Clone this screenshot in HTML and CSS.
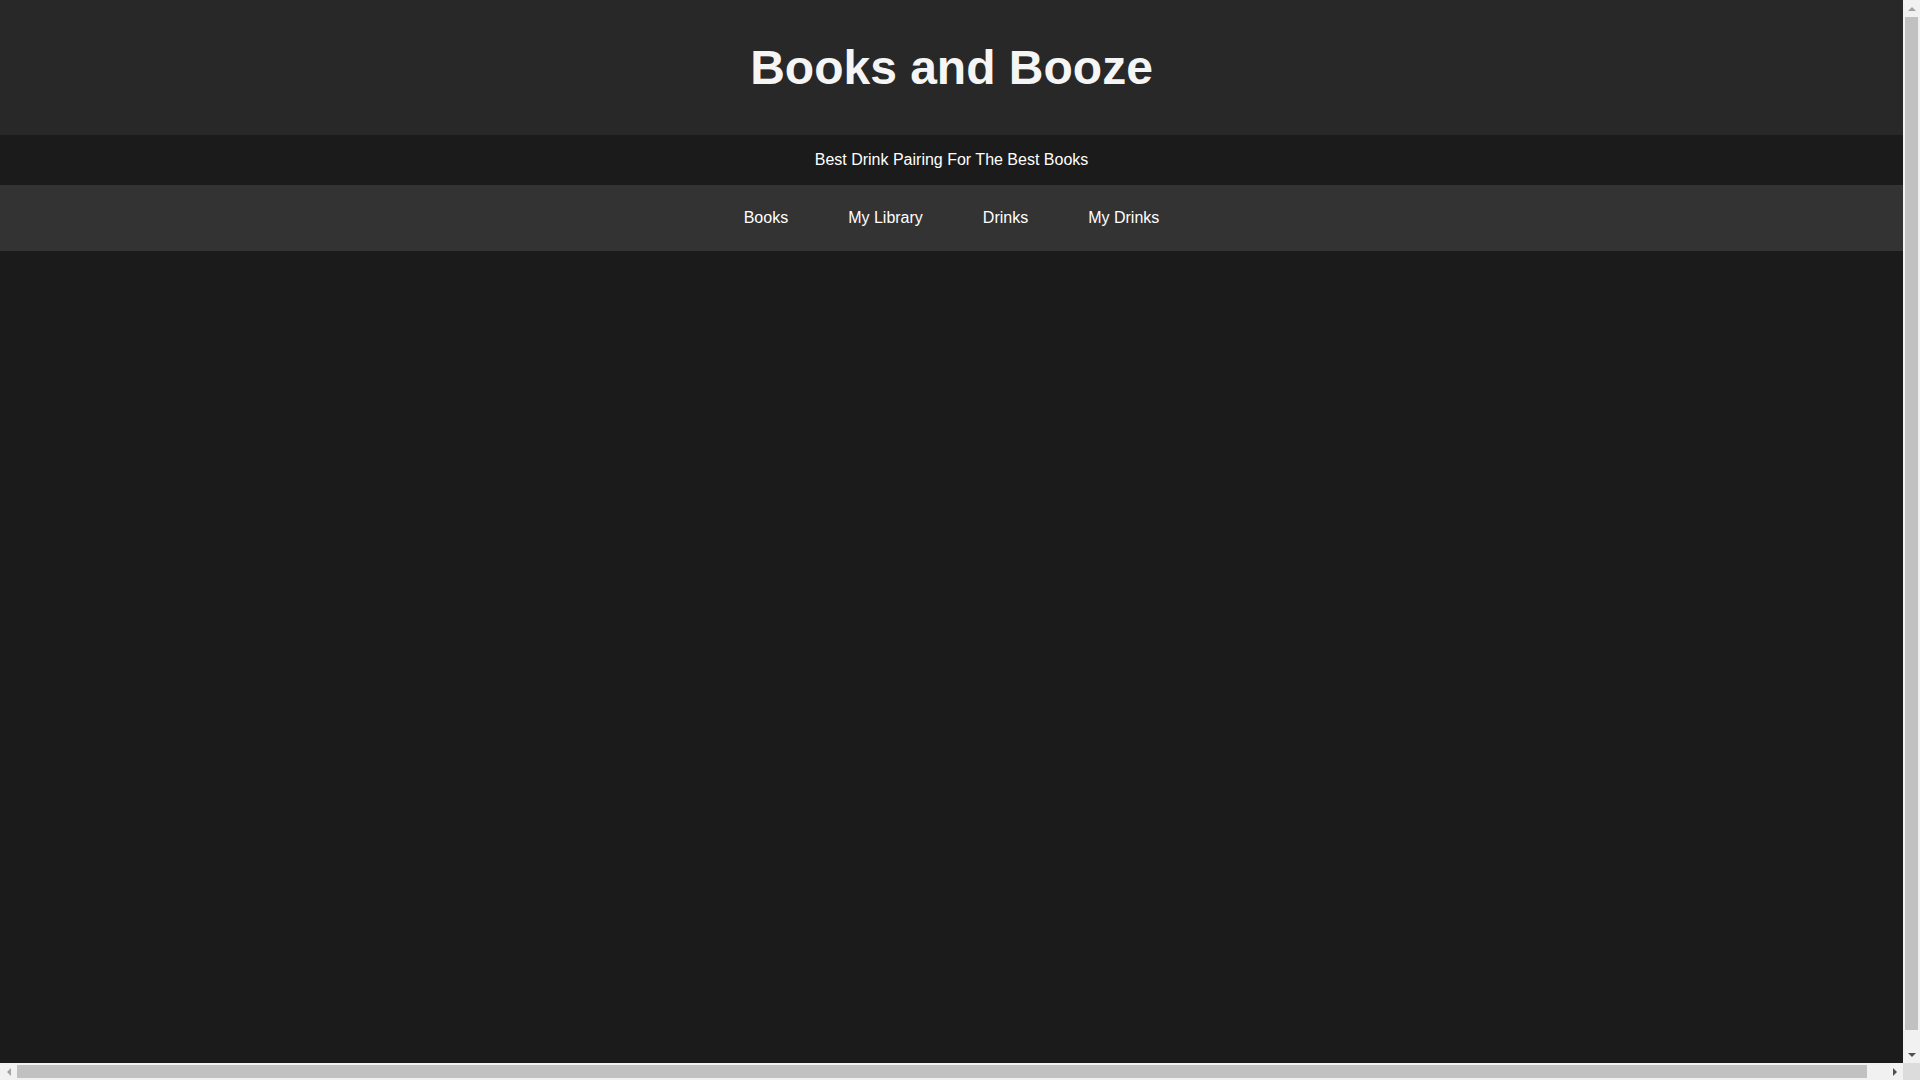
FILE: index.html
```html
<!DOCTYPE html>
<html lang="en">
<head>
<meta charset="utf-8">
<title>Books and Booze</title>
<link rel="stylesheet" href="styles.css">
</head>
<body>
<div class="window">
  <div class="page">
    <header class="site-header">
      <h1 class="site-title">Books and Booze</h1>
    </header>
    <div class="tagline">Best Drink Pairing For The Best Books</div>
    <nav class="main-nav">
      <a class="nav-link" href="#">Books</a>
      <a class="nav-link" href="#">My Library</a>
      <a class="nav-link" href="#">Drinks</a>
      <a class="nav-link" href="#">My Drinks</a>
    </nav>
    <main class="content"></main>
  </div>
  <div class="vscroll">
    <div class="sb-btn"><span class="arrow arrow-up"></span></div>
    <div class="vtrack"><div class="vthumb"></div></div>
    <div class="sb-btn"><span class="arrow arrow-down"></span></div>
  </div>
  <div class="hscroll">
    <div class="sb-btn"><span class="arrow arrow-left"></span></div>
    <div class="htrack"><div class="hthumb"></div></div>
    <div class="sb-btn"><span class="arrow arrow-right"></span></div>
  </div>
  <div class="corner"></div>
</div>
</body>
</html>
```
FILE: styles.css
```css
html, body {
  margin: 0;
  height: 100%;
  overflow: hidden;
  background: #1b1b1b;
}
body {
  color: #fff;
  font-family: "Liberation Sans", Arial, sans-serif;
  font-size: 16px;
}
.window {
  display: grid;
  grid-template-columns: 1fr 17px;
  grid-template-rows: 1fr 17px;
  height: 100vh;
}
.page {
  overflow: hidden;
  min-width: 0;
  min-height: 0;
  background: #1b1b1b;
}
.site-header {
  background: #282828;
  padding: 8px 0;
  text-align: center;
}
.site-title {
  margin: 32px 0;
  font-size: 48px;
  font-weight: bold;
  color: #f5f5f5;
  line-height: normal;
}
.tagline {
  background: #1b1b1b;
  padding: 16px 0;
  text-align: center;
  line-height: normal;
}
.main-nav {
  background: #333333;
  display: flex;
  justify-content: center;
  padding: 24px 0;
  line-height: normal;
}
.nav-link {
  color: #fff;
  text-decoration: none;
  padding: 0 30px;
}

/* scrollbars */
.vscroll {
  background: #f1f1f1;
  display: flex;
  flex-direction: column;
}
.hscroll {
  background: #f1f1f1;
  display: flex;
}
.corner {
  background: #dcdcdc;
}
.sb-btn {
  width: 17px;
  height: 17px;
  flex: none;
  display: flex;
  align-items: center;
  justify-content: center;
}
.vtrack {
  flex: 1;
  padding: 0 2px 16px;
  display: flex;
  flex-direction: column;
}
.vthumb {
  flex: 1;
  background: #c1c1c1;
}
.htrack {
  flex: 1;
  padding: 2px 19px 2px 0;
  display: flex;
}
.hthumb {
  flex: 1;
  background: #c1c1c1;
}
.arrow {
  width: 0;
  height: 0;
  display: block;
}
.arrow-up {
  border-left: 4px solid transparent;
  border-right: 4px solid transparent;
  border-bottom: 4px solid #a3a3a3;
}
.arrow-down {
  border-left: 4px solid transparent;
  border-right: 4px solid transparent;
  border-top: 4px solid #505050;
}
.arrow-left {
  border-top: 4px solid transparent;
  border-bottom: 4px solid transparent;
  border-right: 4px solid #a3a3a3;
}
.arrow-right {
  border-top: 4px solid transparent;
  border-bottom: 4px solid transparent;
  border-left: 4px solid #505050;
}
```
